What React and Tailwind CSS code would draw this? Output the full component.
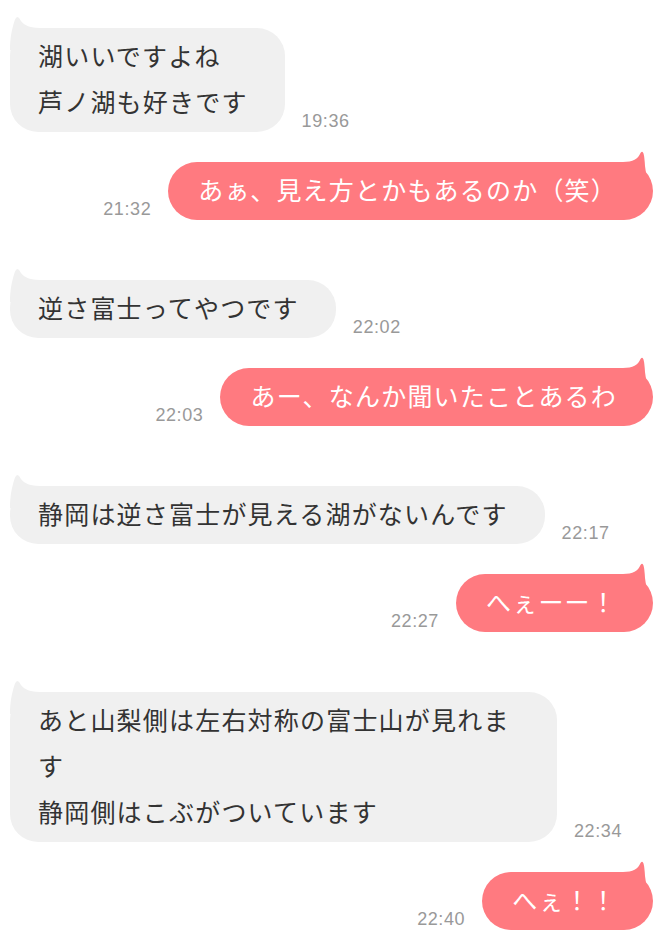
import React from "react";

const messages = [
  { side: "left", lines: ["湖いいですよね", "芦ノ湖も好きです"], time: "19:36" },
  { side: "right", lines: ["あぁ、見え方とかもあるのか（笑）"], time: "21:32" },
  { side: "left", lines: ["逆さ富士ってやつです"], time: "22:02" },
  { side: "right", lines: ["あー、なんか聞いたことあるわ"], time: "22:03" },
  { side: "left", lines: ["静岡は逆さ富士が見える湖がないんです"], time: "22:17" },
  { side: "right", lines: ["へぇーー！"], time: "22:27" },
  {
    side: "left",
    lines: ["あと山梨側は左右対称の富士山が見れま", "す", "静岡側はこぶがついています"],
    time: "22:34",
    wide: true,
  },
  { side: "right", lines: ["へぇ！！"], time: "22:40" },
];

function Time({ value }) {
  return (
    <span className="shrink-0 font-['Liberation_Sans',sans-serif] text-[18px] leading-[21px] tracking-[0.6px] text-[#999999]">
      {value}
    </span>
  );
}

function LeftBubble({ msg }) {
  return (
    <div className="flex items-end gap-[17px] pl-[10px]">
      <div
        className={
          "relative rounded-[28px] bg-[#f0f0f0] pt-[4px] pb-[8px] pl-[28px] pr-[37px] text-[#333333] " +
          (msg.wide ? "w-[547px]" : "")
        }
      >
        <svg className="absolute left-0 top-0 overflow-visible" width="32" height="24" viewBox="0 0 32 24">
          <path d="M0 22C0 10 2 0 5 -8.5Q7 -13 9.5 -9.5C12 -4 18 0 30 0L30 22Z" fill="#f0f0f0" />
        </svg>
        <div className="relative whitespace-nowrap">
          {msg.lines.map((l, i) => (
            <div key={i}>{l}</div>
          ))}
        </div>
      </div>
      <Time value={msg.time} />
    </div>
  );
}

function RightBubble({ msg }) {
  return (
    <div className="flex items-end justify-end gap-[17px] pr-[14px]">
      <Time value={msg.time} />
      <div className="relative rounded-[29px] bg-[#ff7a80] pt-[4px] pb-[8px] pl-[30px] pr-[36px] text-white">
        <svg
          className="absolute right-0 top-0 overflow-visible -scale-x-100"
          width="32"
          height="24"
          viewBox="0 0 32 24"
        >
          <path d="M6 18L8 4Q8.5 -5 9.5 -8.5Q10.5 -11.5 12.5 -9C15 -3 20 0 30 0L30 18Z" fill="#ff7a80" />
        </svg>
        <div className="relative whitespace-nowrap">
          {msg.lines.map((l, i) => (
            <div key={i}>{l}</div>
          ))}
        </div>
      </div>
    </div>
  );
}

export default function App() {
  return (
    <div className="min-h-[951px] w-[667px] bg-white pt-[28px] pb-[20px] font-['Noto_Sans_CJK_JP',sans-serif] text-[25px] leading-[46px] tracking-[1.2px]">
      {messages.map((m, i) => {
        const spacing = i === 0 ? "" : m.side === "left" ? "mt-[60px]" : "mt-[30px]";
        return (
          <div key={i} className={spacing}>
            {m.side === "left" ? <LeftBubble msg={m} /> : <RightBubble msg={m} />}
          </div>
        );
      })}
    </div>
  );
}
